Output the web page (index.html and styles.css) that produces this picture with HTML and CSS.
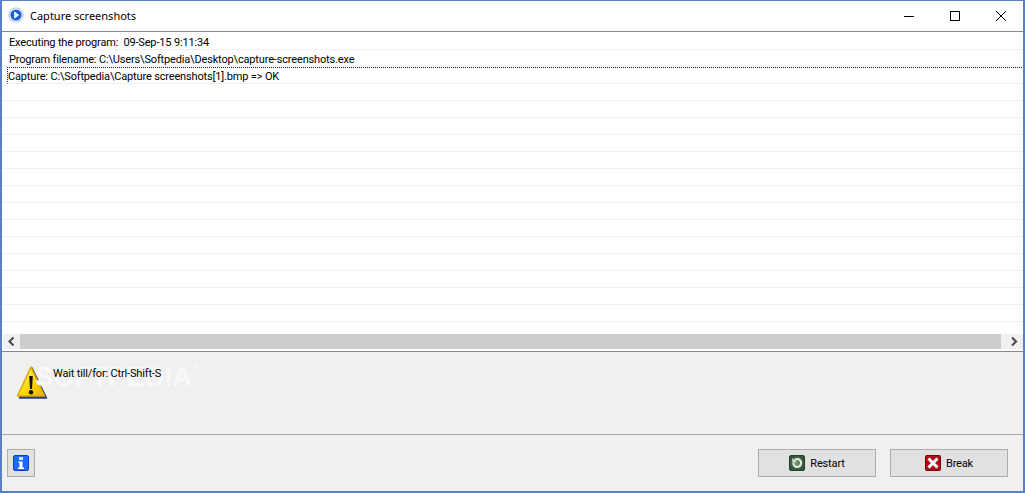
FILE: index.html
```html
<!DOCTYPE html>
<html lang="en">
<head>
<meta charset="utf-8">
<title>Capture screenshots</title>
<link rel="stylesheet" href="styles.css">
</head>
<body>
<div class="window">
  <header class="titlebar">
    <svg class="app-icon" viewBox="0 0 16 16" width="16" height="16">
      <circle cx="8" cy="8" r="7.6" fill="#a9bcdc"/>
      <circle cx="8" cy="8" r="6.7" fill="#f4f7fb"/>
      <circle cx="8" cy="8" r="5.6" fill="#1a5fd6"/>
      <path d="M6.2 4.2 L11.2 8 L6.2 11.800 Z" fill="#fff"/>
    </svg>
    <span class="title">Capture screenshots</span>
    <div class="controls">
      <svg class="ctl" viewBox="0 0 46 30" width="46" height="30"><path d="M18 15.5h10" stroke="#000" fill="none"/></svg>
      <svg class="ctl" viewBox="0 0 46 30" width="46" height="30"><rect x="18.5" y="10.5" width="9" height="9" stroke="#000" fill="none"/></svg>
      <svg class="ctl" viewBox="0 0 46 30" width="46" height="30"><path d="M18 10l10 10M28 10l-10 10" stroke="#000" fill="none"/></svg>
    </div>
  </header>
  <section class="log">
    <div class="rows">
      <div class="row">Executing the program:&nbsp; 09-Sep-15 9:11:34</div>
      <div class="row">Program filename: C:\Users\Softpedia\Desktop\capture-screenshots.exe</div>
      <div class="row row-focus">Capture: C:\Softpedia\Capture screenshots[1].bmp =&gt; OK</div>
      <div class="row"></div><div class="row"></div><div class="row"></div><div class="row"></div>
      <div class="row"></div><div class="row"></div><div class="row"></div><div class="row"></div>
      <div class="row"></div><div class="row"></div><div class="row"></div><div class="row"></div>
      <div class="row"></div><div class="row"></div>
    </div>
    <div class="scrollbar">
      <svg class="arrow" viewBox="0 0 17 15" width="17" height="15"><path d="M10.500 3.500 L6.500 7.500 L10.500 11.500" stroke="#505050" stroke-width="2.200" fill="none"/></svg>
      <div class="thumb"></div>
      <svg class="arrow" viewBox="0 0 22 15" width="22" height="15"><path d="M11 3.500 L15 7.500 L11 11.500" stroke="#505050" stroke-width="2.200" fill="none"/></svg>
    </div>
  </section>
  <section class="status">
    <span class="watermark">SOFTPEDIA<sup class="reg">®</sup></span>
    <svg class="warn" viewBox="0 0 32 36" width="32" height="36">
      <defs><linearGradient id="wg" x1="0" y1="0" x2="1" y2="1"><stop offset="0" stop-color="#fff37c"/><stop offset="0.6" stop-color="#fbd600"/><stop offset="1" stop-color="#e8ad00"/></linearGradient></defs>
      <path d="M16 4 L30.500 34 L3.500 34 Z" fill="#2c3a84" stroke="#2c3a84" stroke-linejoin="round" stroke-width="1.500"/>
      <path d="M15 3 L28.500 32 L1.500 32 Z" fill="url(#wg)" stroke="#d9a800" stroke-linejoin="round" stroke-width="1.500"/>
      <path d="M13.200 12 h3.600 l-.8 13 h-2 Z" fill="#111"/>
      <circle cx="15" cy="28.200" r="2.200" fill="#111"/>
    </svg>
    <span class="status-text">Wait till/for: Ctrl-Shift-S</span>
  </section>
  <footer class="footer">
    <button class="btn btn-info" type="button" aria-label="Info">
      <svg viewBox="0 0 16 16" width="16" height="16">
        <rect x="0.500" y="0.500" width="15" height="15" rx="1.500" fill="#1a6cf5" stroke="#0a3fd0"/>
        <rect x="6" y="2" width="4" height="3" fill="#c8f0ff"/>
        <path d="M5.500 6.500h4v6h1.500v1.500h-6v-1.500h1.500v-4.500h-1z" fill="#fff"/>
      </svg>
    </button>
    <button class="btn btn-action" type="button">
      <svg viewBox="0 0 16 16" width="16" height="16">
        <defs><radialGradient id="rg"><stop offset="0" stop-color="#6f8f6c"/><stop offset="1" stop-color="#33523a"/></radialGradient></defs>
        <rect x="0.500" y="0.500" width="15" height="15" rx="1.500" fill="url(#rg)" stroke="#2b3f2d"/>
        <path d="M4.300 8a3.900 3.900 0 1 0 1.500-3.100" stroke="#e2ead9" stroke-width="2.200" fill="none"/>
        <path d="M3.300 3v4.500h4.500z" fill="#e2ead9"/>
      </svg>
      Restart
    </button>
    <button class="btn btn-action" type="button">
      <svg viewBox="0 0 16 16" width="16" height="16">
        <rect x="0.500" y="0.500" width="15" height="15" rx="1" fill="#b00d14" stroke="#6e0508"/>
        <path d="M3.500 3.500l9 9M12.500 3.500l-9 9" stroke="#fff" stroke-width="3" fill="none"/>
      </svg>
      Break
    </button>
  </footer>
</div>
</body>
</html>
```
FILE: styles.css
```css
* { box-sizing: border-box; }
html, body { margin: 0; padding: 0; }
body {
  width: 1025px;
  height: 493px;
  overflow: hidden;
  font-family: Roboto, "Liberation Sans", Arial, sans-serif;
  font-size: 11px;
  letter-spacing: -0.16px;
  color: #000;
}
.window {
  width: 1025px;
  height: 493px;
  display: flex;
  flex-direction: column;
  background: #f0f0f0;
  border: 1px solid #5b7fc1;
  border-width: 1px 2px 2px 2px;
}
.titlebar {
  height: 30px;
  flex: none;
  display: flex;
  align-items: center;
  background: #fff;
  padding-left: 6px;
}
.app-icon { flex: none; margin-top: -2px; }
.title {
  margin: -2px 0 0 6px;
  font-family: "Noto Sans", sans-serif;
  font-size: 11px;
  letter-spacing: 0;
}
.controls { margin-left: auto; display: flex; margin-right: -1px; }
.ctl { display: block; }
.log {
  height: 321px;
  flex: none;
  display: flex;
  flex-direction: column;
  background: #fff;
  border-top: 1px solid #82869a;
  border-bottom: 1px solid #82869a;
}
.rows { flex: 1; overflow: hidden; padding-top: 1px; min-height: 0; }
.row {
  height: 17px;
  line-height: 17px;
  padding: 1px 0 0 7px;
  border-bottom: 1px solid #f0f0f0;
  white-space: nowrap;
}
.row-focus {
  margin: 0 1px 0 5px;
  padding: 0;
  border-top: 1px dotted #222;
  border-left: 1px dotted #222;
}
.scrollbar {
  height: 15px;
  flex: none;
  display: flex;
  margin: 0 0 2px 1px;
  background: #f0f0f0;
}
.arrow { flex: none; display: block; }
.thumb { flex: 1; background: #cdcdcd; }
.status {
  position: relative;
  height: 83px;
  flex: none;
  display: flex;
  align-items: flex-start;
  padding: 12px 0 0 14px;
  border-bottom: 1px solid #a9a9a9;
}
.warn { flex: none; }
.status-text { margin: 3px 0 0 5px; position: relative; }
.watermark {
  position: absolute;
  left: 33px;
  top: 10px;
  font-family: "Liberation Sans", Arial, sans-serif;
  font-size: 27px;
  font-weight: 700;
  letter-spacing: 0.3px;
  color: #f8f8f8;
  white-space: nowrap;
}
.reg { font-size: 9px; vertical-align: top; font-weight: 400; }
.footer {
  flex: 1;
  display: flex;
  align-items: flex-start;
  padding: 14px 15px 0 5px;
}
.btn {
  height: 28px;
  display: flex;
  align-items: center;
  justify-content: center;
  gap: 5px;
  padding: 0;
  background: #e1e1e1;
  border: 1px solid #adadad;
  font: inherit;
  letter-spacing: inherit;
  color: #000;
}
.btn-info { width: 28px; }
.btn-action { width: 118px; margin-left: 14px; }
.btn-info + .btn-action { margin-left: auto; }
```
